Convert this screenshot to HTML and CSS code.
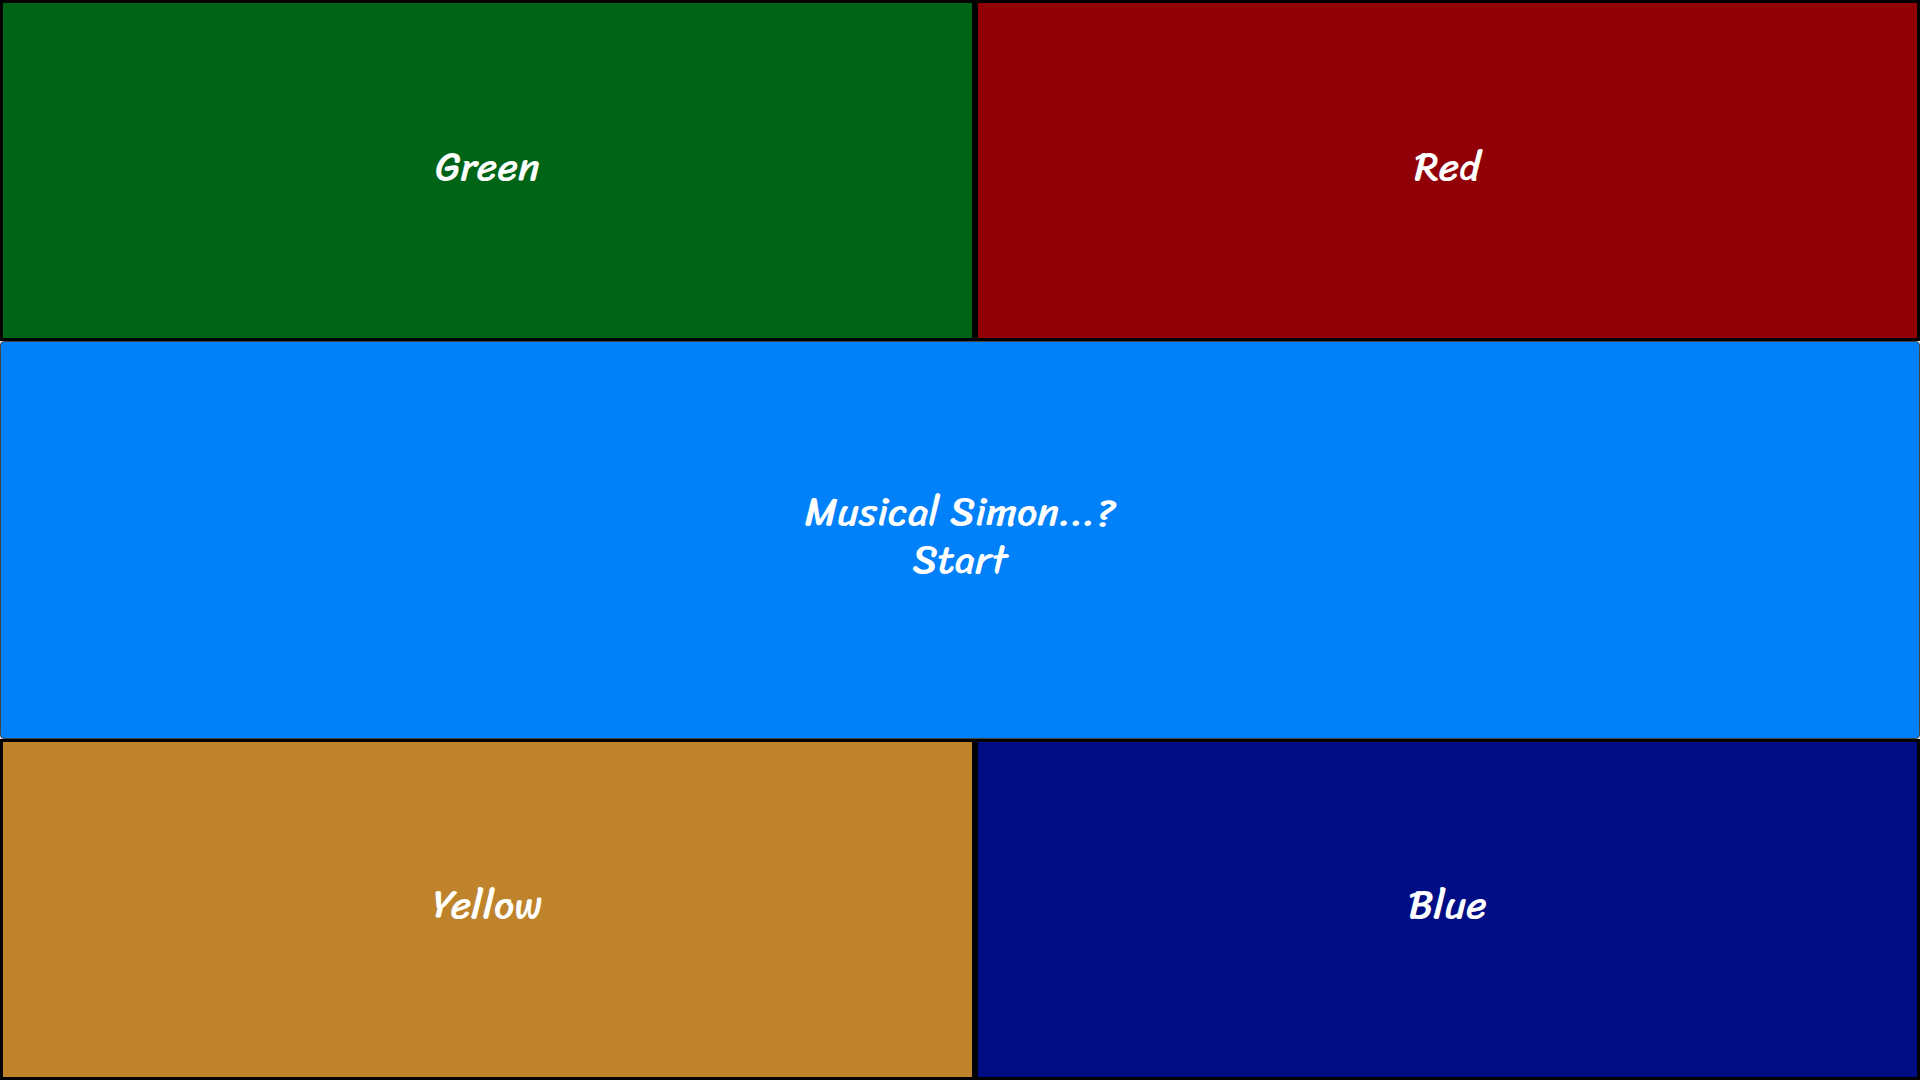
FILE: index.html
```html
<!DOCTYPE html>
<html lang="en">
<head>
<meta charset="utf-8">
<title>Musical Simon</title>
<meta name="viewport" content="width=device-width, initial-scale=1">
<link rel="stylesheet" href="styles.css">
</head>
<body>
<main class="game">
  <div class="row">
    <button type="button" class="pad green">Green</button>
    <button type="button" class="pad red">Red</button>
  </div>
  <button type="button" class="start">Musical Simon...?<br>Start</button>
  <div class="row">
    <button type="button" class="pad yellow">Yellow</button>
    <button type="button" class="pad blue">Blue</button>
  </div>
</main>
</body>
</html>
```

FILE: styles.css
```css
* {
  box-sizing: border-box;
}

body {
  margin: 0;
  background: #fff;
}

.game {
  display: grid;
  grid-template-rows: 6fr 7fr 6fr;
  min-height: 100vh;
}

.row {
  display: grid;
  grid-template-columns: 65fr 63fr;
}

.pad,
.start {
  margin: 0;
  padding: 0 0 8px;
  color: #fff;
  font: 400 40px/48px Sriracha, Kalam, "Comic Neue", Lato, sans-serif;
  text-align: center;
  cursor: pointer;
}

.pad {
  border: 3px solid #000;
  border-radius: 0;
}

.start {
  border: 1px solid #444;
  border-radius: 4px;
  background: #0080f9;
}

.green {
  background: #006416;
}

.red {
  background: #910007;
}

.yellow {
  background: #be832b;
}

.blue {
  background: #000d85;
}
```
